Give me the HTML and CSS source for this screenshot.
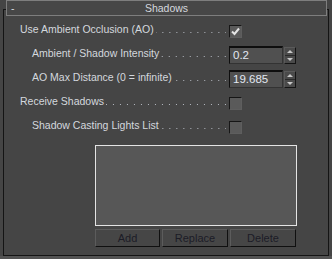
FILE: index.html
```html
<!DOCTYPE html>
<html lang="en">
<head>
<meta charset="utf-8">
<title>Shadows</title>
<link rel="stylesheet" href="styles.css">
</head>
<body>
<div class="rollout">
	<div class="frame">
		<div class="header"><span class="minus">-</span><span class="title">Shadows</span><span></span></div>
		<div class="rows">
			<div class="row level1">
				<span class="label">Use Ambient Occlusion (AO)</span><span class="leader"></span>
				<span class="ctrl"><span class="check"><svg width="11" height="11" viewBox="0 0 11 11"><polyline points="2,5.5 4.5,8 9,2.5" fill="none" stroke="#e4e4e4" stroke-width="2"/></svg></span></span>
			</div>
			<div class="row level2">
				<span class="label">Ambient / Shadow Intensity</span><span class="leader"></span>
				<span class="ctrl"><span class="field">0.2</span><span class="arrows"><span class="up"></span><span class="down"></span></span></span>
			</div>
			<div class="row level2">
				<span class="label">AO Max Distance (0 = infinite)</span><span class="leader"></span>
				<span class="ctrl"><span class="field">19.685</span><span class="arrows"><span class="up"></span><span class="down"></span></span></span>
			</div>
			<div class="row level1">
				<span class="label">Receive Shadows</span><span class="leader"></span>
				<span class="ctrl"><span class="check"></span></span>
			</div>
			<div class="row level2">
				<span class="label">Shadow Casting Lights List</span><span class="leader"></span>
				<span class="ctrl"><span class="check"></span></span>
			</div>
		</div>
		<div class="list"></div>
		<div class="buttons">
			<button class="btn btn-add">Add</button>
			<button class="btn">Replace</button>
			<button class="btn">Delete</button>
		</div>
	</div>
</div>
</body>
</html>
```
FILE: styles.css
```css
body { margin: 0px; background-color: #535353;
       font-family: "Liberation Sans", Arial, sans-serif; font-size: 10.5px; color: #d4d8de; }

.rollout { width: 332px; height: 256px; background-color: #454545; padding-top: 9px; box-sizing: border-box; }
.frame { margin-left: 3px; width: 326px; height: 247px; box-sizing: border-box;
         border: 1px solid #141414; }

.header { display: grid; grid-template-columns: 16px 1fr 16px;
          margin-top: -10px; margin-left: 2px; margin-right: 1px; height: 16px; box-sizing: border-box;
          border: 1px solid #7e7e7e; background-color: #474747; line-height: 14px; }
.minus { padding-left: 4px; }
.title { text-align: center; }

.rows { padding-top: 3px; }
.row { display: flex; align-items: center; height: 24px; }
.level1 { padding-left: 16px; }
.level2 { padding-left: 28px; }
.label { line-height: 13px; margin-bottom: 3px; white-space: nowrap; }
.leader { flex: 1; height: 13px; margin-bottom: 3px; margin-left: 2px; margin-right: 3px;
          background-image: linear-gradient(to right, transparent 6px, #b4b8c0 6px);
          background-size: 7px 1px; background-repeat: repeat-x; background-position: right 0px top 9px; }
.ctrl { width: 99px; display: flex; align-items: center; }

.check { width: 13px; height: 13px; box-sizing: border-box; display: flex; align-items: center; justify-content: center;
         border: 1px solid; border-color: #161616 #5e5e5e #5e5e5e #161616; background-color: #5a5a5a; }
.check svg { display: block; }

.field { width: 54px; height: 18px; box-sizing: border-box; padding-left: 3px;
         border-style: solid; border-width: 2px 1px 1px 1px; border-color: #0e0e0e #333333 #333333 #0e0e0e;
         background-color: #505050; color: #e2e8f2; font-size: 11.5px; line-height: 15px; }
.arrows { width: 12px; height: 17px; margin-left: 1px; box-sizing: border-box; display: flex; flex-direction: column;
          border: 1px solid; border-color: #5a5a5a #141414 #141414 #5a5a5a; background-color: #4a4a4a; }
.up, .down { flex: 1; display: flex; align-items: center; justify-content: center; }
.up::before { content: ""; border-left: 3px solid transparent; border-right: 3px solid transparent; border-bottom: 3px solid #c8c8c8; }
.down::before { content: ""; border-left: 3px solid transparent; border-right: 3px solid transparent; border-top: 3px solid #c8c8c8; }
.down { border-top: 1px solid #2a2a2a; }

.list { margin-top: 6px; margin-left: 91px; width: 202px; height: 81px; box-sizing: border-box;
        border: 1px solid #e4e4e4; background-color: #575757; }

.buttons { display: flex; gap: 2px; margin-top: 3px; margin-left: 91px; }
.btn { width: 66px; height: 18px; box-sizing: border-box; padding: 0px; margin: 0px;
       border: 1px solid; border-color: #5c5c5c #101010 #101010 #5c5c5c; background-color: #464646;
       font-family: "Liberation Sans", Arial, sans-serif; font-size: 11px; color: #1c1c26; line-height: 15px; }
.btn-add { width: 65px; }
```
